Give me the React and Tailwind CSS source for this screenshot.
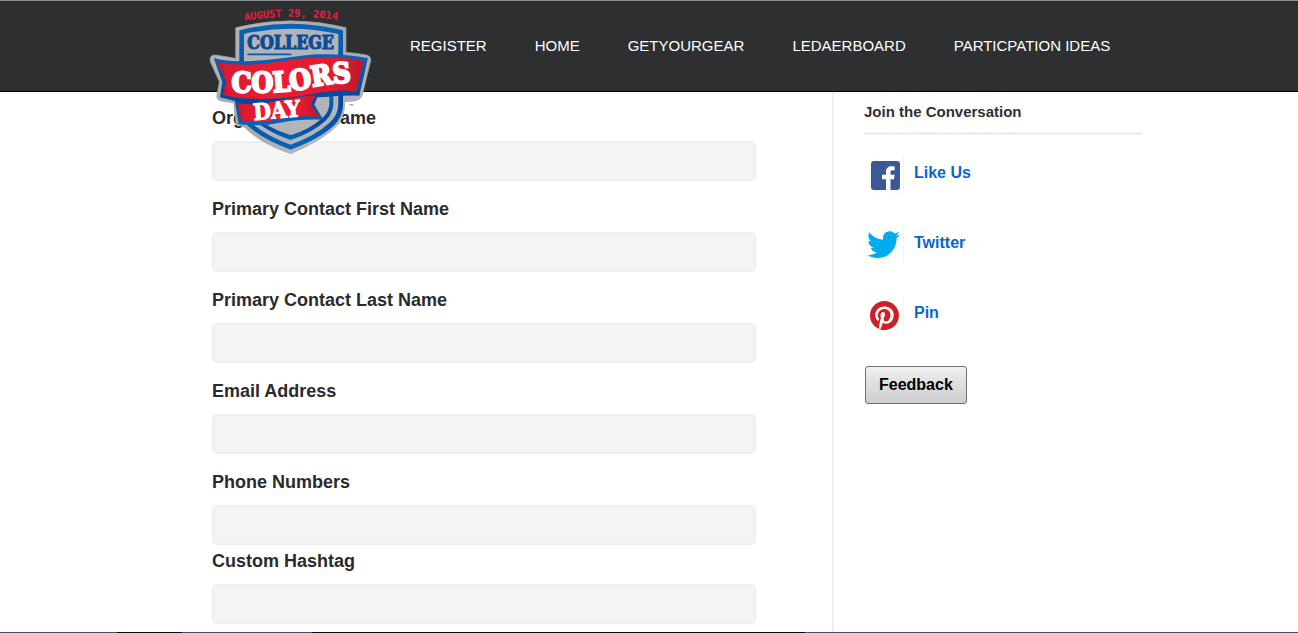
const NAV = ['REGISTER', 'HOME', 'GETYOURGEAR', 'LEDAERBOARD', 'PARTICPATION IDEAS'];

const FIELDS = [
  { id: 'organization', label: 'Organization Name', gap: 'mb-4' },
  { id: 'first', label: 'Primary Contact First Name', gap: 'mb-4' },
  { id: 'last', label: 'Primary Contact Last Name', gap: 'mb-4' },
  { id: 'email', label: 'Email Address', gap: 'mb-4' },
  { id: 'phone', label: 'Phone Numbers', gap: 'mb-1' },
  { id: 'hashtag', label: 'Custom Hashtag', gap: 'mb-2' },
];

function Logo() {
  return (
    <svg viewBox="0 0 540 480" className="block h-[160px] w-[180px]" role="img" aria-label="College Colors Day">
      <defs>
        <linearGradient id="silver" x1="0" y1="0" x2="1" y2="1">
          <stop offset="0" stopColor="#b9bbbf" />
          <stop offset="0.5" stopColor="#a3a6aa" />
          <stop offset="1" stopColor="#c3c5c9" />
        </linearGradient>
        <linearGradient id="blue" x1="0" y1="0" x2="0" y2="1">
          <stop offset="0" stopColor="#0a63b5" />
          <stop offset="0.65" stopColor="#07479a" />
          <stop offset="1" stopColor="#0568bb" />
        </linearGradient>
        <linearGradient id="red" x1="0" y1="0" x2="1" y2="0">
          <stop offset="0" stopColor="#d51b32" />
          <stop offset="0.4" stopColor="#f01a30" />
          <stop offset="0.8" stopColor="#e21a30" />
          <stop offset="1" stopColor="#b91a31" />
        </linearGradient>
        <path id="dateArc" d="M134 62 Q272 40 414 60" />
        <path id="colorsArc" d="M94 277 C190 277 260 279 325 264 Q390 248 470 246" />
      </defs>
      <path
        d="M107 83 Q272 42 438 83 L438 157 Q472 160 500 165 Q514 169 512 183 L487 284 Q482 302 460 303 L434 305 Q434 350 414 373 Q378 416 272 461 Q180 430 134 382 L108 373 L101 309 L66 303 Q48 301 51 283 L58 245 L31 185 Q27 163 48 165 L107 175 Z"
        fill="url(#silver)" stroke="#9b9ea2" strokeWidth="2"
      />
      <path d="M118 91 Q272 52 429 91 L429 320 Q425 355 400 378 Q360 416 272 449 Q190 420 142 376 L118 330 Z" fill="url(#blue)" />
      <path d="M132 102 Q272 70 415 102 L415 315 Q414 345 388 369 Q345 408 272 434 Q208 412 162 376 L132 330 Z" fill="#b1b4b8" />
      <path d="M372 280 H400 V315 Q398 342 376 363 Q335 399 272 420 Q225 405 182 376 L220 360 Z" fill="url(#blue)" />
      <path d="M388 275 V314 Q386 336 367 354 Q330 388 272 406 Q235 394 200 375 L340 340 V280 Z" fill="#b1b4b8" />
      <path d="M41 174 Q90 187 150 183 C220 181 300 166 350 163 Q430 160 504 174 L478 287 Q430 286 376 291 L352 292 L343 314 L370 359 Q300 356 240 368 Q180 381 116 373 L105 303 L60 292 L67 246 Z" fill="url(#blue)" />
      <path d="M51 186 Q110 198 180 192 C260 184 300 174 360 172 Q430 169 491 182 L469 275 Q420 266 355 278 C290 292 210 299 150 296 Q105 294 69 284 L78 244 Z" fill="url(#red)" />
      <path d="M112 309 Q170 319 225 304 Q290 289 347 287 L332 314 L359 351 Q300 345 240 356 Q180 371 124 364 Z" fill="url(#red)" />
      <path d="M112 309 L126 311 L130 366 L124 364 Z M51 186 L67 188 L83 287 L69 284 L78 244 Z" fill="#b51d34" opacity="0.5" />
      <path d="M142 163 H274" stroke="#0b57a9" strokeWidth="5" />
      <text fontFamily="'DejaVu Sans Mono', monospace" fontWeight="bold" fontSize="31" fill="#e5203a">
        <textPath href="#dateArc">AUGUST 29, 2014</textPath>
      </text>
      <g fontFamily="'DejaVu Serif Condensed', 'DejaVu Serif', serif" fontWeight="bold">
        <text x="272" y="148" textAnchor="middle" fontSize="53" fill="#0b4b98" stroke="#0b4b98" strokeWidth="3">COLLEGE</text>
        <text fontSize="84" fill="#ffffff" stroke="#ffffff" strokeWidth="6">
          <textPath href="#colorsArc">COLORS</textPath>
        </text>
        <text x="162" y="361" fontSize="68" fill="#ffffff" stroke="#ffffff" strokeWidth="3" transform="rotate(-5 162 361)">DAY</text>
      </g>
      <text x="446" y="320" fontFamily="'Liberation Sans', sans-serif" fontSize="14" fill="#16509b">™</text>
    </svg>
  );
}

function FacebookIcon() {
  return (
    <svg viewBox="0 0 29 29" className="ml-[7px] size-[29px]" aria-hidden="true">
      <rect width="29" height="29" rx="3" fill="#3b5998" />
      <path d="M15 29V18.2h-4v-4.400h4v-3C15 7.200 17.200 5.200 20.500 5.200c1.500 0 2.800.1 3.200.2v3.800h-2.200c-1.700 0-2 .8-2 2v2.600h4.100l-.6 4.400h-3.500V29z" fill="#fff" />
    </svg>
  );
}

function TwitterIcon() {
  return (
    <svg viewBox="0 0 24 20" className="ml-[3px] h-[28px] w-[33px]" aria-hidden="true">
      <path d="M24 2.370a9.800 9.800 0 0 1-2.830.770A4.930 4.930 0 0 0 23.340.420a9.860 9.860 0 0 1-3.130 1.200 4.920 4.920 0 0 0-8.390 4.480A13.980 13.980 0 0 1 1.670.950a4.930 4.930 0 0 0 1.520 6.580 4.900 4.900 0 0 1-2.230-.620v.060a4.930 4.930 0 0 0 3.950 4.830 4.930 4.930 0 0 1-2.220.080 4.930 4.930 0 0 0 4.600 3.420A9.880 9.880 0 0 1 0 17.340a13.940 13.940 0 0 0 7.550 2.210c9.140 0 14.310-7.720 13.980-14.640A10 10 0 0 0 24 2.370z" fill="#00aced" />
    </svg>
  );
}

function PinterestIcon() {
  return (
    <svg viewBox="0 0 24 24" className="ml-[6px] size-[29px]" aria-hidden="true">
      <circle cx="12" cy="12" r="11.500" fill="#fff" />
      <path d="M12 0C5.370 0 0 5.370 0 12c0 5.080 3.160 9.420 7.630 11.170-.1-.95-.2-2.410.04-3.440l1.400-5.960s-.36-.72-.36-1.780c0-1.660.97-2.910 2.170-2.910 1.020 0 1.520.770 1.520 1.690 0 1.030-.66 2.570-1 4-.28 1.200.6 2.170 1.780 2.170 2.140 0 3.770-2.250 3.770-5.490 0-2.870-2.060-4.870-5-4.870-3.410 0-5.410 2.560-5.410 5.200 0 1.030.390 2.140.890 2.740.1.120.110.230.080.350l-.33 1.360c-.05.220-.17.270-.4.160-1.500-.7-2.430-2.890-2.430-4.650 0-3.780 2.750-7.250 7.920-7.250 4.160 0 7.390 2.970 7.390 6.930 0 4.130-2.610 7.460-6.230 7.460-1.210 0-2.360-.63-2.750-1.380l-.75 2.850c-.27 1.040-1 2.350-1.490 3.150 1.120.340 2.310.530 3.550.530 6.630 0 12-5.370 12-12S18.630 0 12 0z" fill="#cb2027" />
    </svg>
  );
}

const SOCIAL = [
  { label: 'Like Us', Icon: FacebookIcon },
  { label: 'Twitter', Icon: TwitterIcon },
  { label: 'Pin', Icon: PinterestIcon },
];

export default function App() {
  return (
    <div className="bg-white font-['Liberation_Sans',Arial,sans-serif] text-[#2f3032]">
      <header className="relative border-t border-b border-t-[#8b9093] border-b-black bg-[#2e2f31]">
        <div className="mx-auto flex h-[90px] max-w-[984px] items-center pl-[43px]">
          <a href="#home" className="absolute -top-px">
            <Logo />
          </a>
          <nav className="flex gap-12 pl-[210px] text-[15px] whitespace-nowrap text-white">
            {NAV.map((item) => (
              <a key={item} href="#nav">{item}</a>
            ))}
          </nav>
        </div>
      </header>
      <div className="mx-auto flex max-w-[984px] pl-[55px]">
        <form className="w-[544px] pt-3.5">
          {FIELDS.map((field) => (
            <div key={field.id} className={field.gap}>
              <label htmlFor={field.id} className="mb-[11px] block text-lg leading-6 font-bold text-[#2b2b2d]">{field.label}</label>
              <input id={field.id} type="text" className="block h-10 w-full rounded-[5px] border-2 border-[#efefef] bg-[#f4f4f4] px-3 outline-none" />
            </div>
          ))}
        </form>
        <aside className="ml-[76px] flex-1 border-l-2 border-[#efefef] pt-2.5 pl-[30px]">
          <h2 className="mb-[5px] border-b-3 border-[#efefef] pb-2.5 text-[15px] leading-5 font-bold">Join the Conversation</h2>
          <ul className="mb-4">
            {SOCIAL.map(({ label, Icon }) => (
              <li key={label} className="flex h-[70px] items-center">
                <a href="#social" className="flex h-10 items-center text-base font-bold text-[#0866d0]">
                  <span className="flex h-10 w-10 items-center border-r border-[#f3f3f3]"><Icon /></span>
                  <span className="pb-1 pl-2.5">{label}</span>
                </a>
              </li>
            ))}
          </ul>
          <button type="button" className="ml-px h-[38px] rounded-[3px] border border-[#707070] bg-linear-to-b from-[#f2f2f2] from-0% via-[#dddddd] via-50% to-[#cfcfcf] px-[13px] text-base font-bold text-black">Feedback</button>
        </aside>
      </div>
      <footer className="flex h-px bg-[#445566]">
        <div className="ml-[9%] w-[5%] bg-[#0c0a10]" />
        <div className="ml-[10%] w-[38%] bg-[#0c0a10]" />
      </footer>
    </div>
  );
}
